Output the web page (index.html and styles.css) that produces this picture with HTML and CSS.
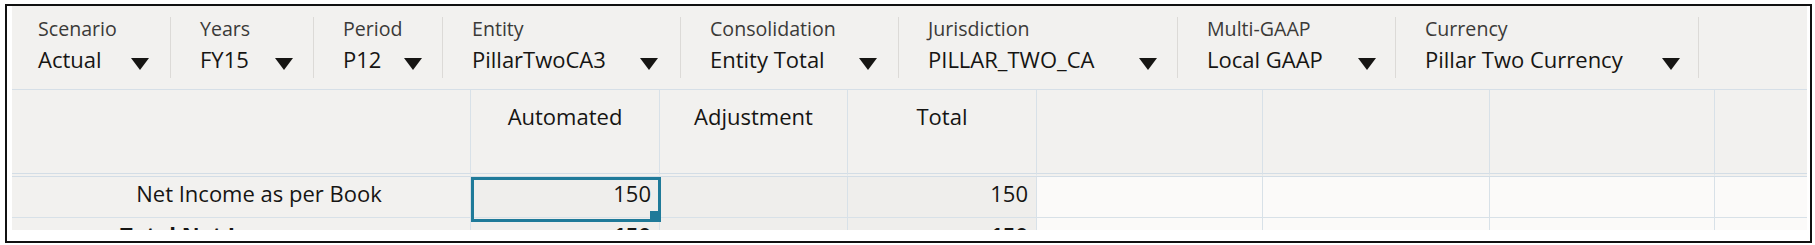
FILE: index.html
```html
<!DOCTYPE html>
<html lang="en">
<head>
    <meta charset="UTF-8">
    <meta name="viewport" content="width=device-width, initial-scale=1.0">
    <title>Pillar Two Form</title>
    <link rel="stylesheet" href="styles.css">
</head>
<body>

<div class="frame">
    <div class="sheet">
        <!-- Point of view bar -->
        <div class="pov-bar">
            <div class="pov pov-scenario">
                <div class="pov-label">Scenario</div>
                <div class="pov-value"><span>Actual</span><svg class="caret" viewBox="0 0 18 12"><polygon points="0,0 18,0 9,12"/></svg></div>
            </div>
            <div class="pov pov-years">
                <div class="pov-label">Years</div>
                <div class="pov-value"><span>FY15</span><svg class="caret" viewBox="0 0 18 12"><polygon points="0,0 18,0 9,12"/></svg></div>
            </div>
            <div class="pov pov-period">
                <div class="pov-label">Period</div>
                <div class="pov-value"><span>P12</span><svg class="caret" viewBox="0 0 18 12"><polygon points="0,0 18,0 9,12"/></svg></div>
            </div>
            <div class="pov pov-entity">
                <div class="pov-label">Entity</div>
                <div class="pov-value"><span>PillarTwoCA3</span><svg class="caret" viewBox="0 0 18 12"><polygon points="0,0 18,0 9,12"/></svg></div>
            </div>
            <div class="pov pov-consol">
                <div class="pov-label">Consolidation</div>
                <div class="pov-value"><span>Entity Total</span><svg class="caret" viewBox="0 0 18 12"><polygon points="0,0 18,0 9,12"/></svg></div>
            </div>
            <div class="pov pov-juris">
                <div class="pov-label">Jurisdiction</div>
                <div class="pov-value"><span>PILLAR_TWO_CA</span><svg class="caret" viewBox="0 0 18 12"><polygon points="0,0 18,0 9,12"/></svg></div>
            </div>
            <div class="pov pov-gaap">
                <div class="pov-label">Multi-GAAP</div>
                <div class="pov-value"><span>Local GAAP</span><svg class="caret" viewBox="0 0 18 12"><polygon points="0,0 18,0 9,12"/></svg></div>
            </div>
            <div class="pov pov-currency">
                <div class="pov-label">Currency</div>
                <div class="pov-value"><span>Pillar Two Currency</span><svg class="caret" viewBox="0 0 18 12"><polygon points="0,0 18,0 9,12"/></svg></div>
            </div>
        </div>

        <!-- Data grid -->
        <div class="grid">
            <div class="cell head"></div>
            <div class="cell head col-head">Automated</div>
            <div class="cell head col-head">Adjustment</div>
            <div class="cell head col-head">Total</div>
            <div class="cell head"></div>
            <div class="cell head"></div>
            <div class="cell head"></div>
            <div class="cell head last"></div>

            <div class="cell row-head">Net Income as per Book</div>
            <div class="cell num readonly selected">150<span class="handle"></span></div>
            <div class="cell num readonly"></div>
            <div class="cell num readonly">150</div>
            <div class="cell open"></div>
            <div class="cell open"></div>
            <div class="cell open"></div>
            <div class="cell open last"></div>

            <div class="cell row-head total-head bold">Total Net Income</div>
            <div class="cell num readonly bold">150</div>
            <div class="cell num readonly"></div>
            <div class="cell num readonly bold">150</div>
            <div class="cell open"></div>
            <div class="cell open"></div>
            <div class="cell open"></div>
            <div class="cell open last"></div>
        </div>
    </div>
</div>

</body>
</html>
```

FILE: styles.css
```css
body {
    margin: 0;
    padding: 0;
    background-color: #fff;
    font-family: "Open Sans", "Noto Sans", sans-serif;
    color: #161513;
}
.frame {
    box-sizing: border-box;
    width: 1807px;
    height: 239px;
    margin: 4px 0 0 5px;
    padding: 0 3px 11px 5px;
    border: 2px solid #111;
    background-color: #fff;
}
.sheet {
    height: 100%;
    overflow: hidden;
    background-color: #f2f1ef;
}

/* POV bar */
.pov-bar {
    display: flex;
    padding: 11px 0 11px 0;
    border-bottom: 1px solid #d6dfe7;
}
.pov {
    box-sizing: border-box;
    height: 61px;
    padding: 0 20px 0 29px;
    border-left: 1px solid #dcdad7;
    display: flex;
    flex-direction: column;
}
.pov-label {
    font-size: 19.6px;
    line-height: 24px;
    color: #3b3a38;
}
.pov-value {
    margin-top: 3px;
    display: flex;
    justify-content: space-between;
    font-size: 22px;
    line-height: 30px;
    white-space: nowrap;
}
.caret {
    width: 18px;
    height: 12px;
    margin-top: 14px;
    fill: #161513;
}
.pov-scenario { width: 158px; border-left: none; padding-left: 26px; padding-right: 21px; }
.pov-years { width: 143px; }
.pov-period { width: 129px; }
.pov-entity { width: 238px; padding-right: 22px; }
.pov-consol { width: 218px; padding-right: 21px; }
.pov-juris { width: 279px; }
.pov-gaap { width: 218px; padding-right: 19px; }
.pov-currency { width: 304px; padding-right: 18px; border-right: 1px solid #dcdad7; }

/* Grid */
.grid {
    display: grid;
    grid-template-columns: 459px 189px 188px 189px 226px 227px 225px 1fr;
    grid-template-rows: 87px 41px 41px;
    font-size: 22px;
}
.cell {
    box-sizing: border-box;
    border-right: 1px solid #d8e1e8;
    border-bottom: 1px solid #d8e1e8;
    line-height: 33px;
    white-space: nowrap;
}
.cell.last {
    border-right: none;
}
.head {
    border-bottom: 4px double #d3dde6;
}
.col-head {
    padding-top: 11px;
    line-height: 30px;
    text-align: center;
}
.row-head {
    padding-left: 36px;
    text-align: center;
}
.total-head {
    padding-left: 108px;
    text-align: left;
}
.num {
    padding-right: 8px;
    text-align: right;
}
.readonly {
    background-color: #efeeec;
}
.open {
    background-color: #fbfaf9;
}
.bold {
    font-weight: bold;
}
.selected {
    position: relative;
}
.selected::after {
    content: "";
    position: absolute;
    top: 0;
    left: 0;
    right: -2px;
    bottom: -5px;
    border: 3px solid #1f7a99;
}
.handle {
    position: absolute;
    right: -2px;
    bottom: -5px;
    width: 11px;
    height: 11px;
    background-color: #1f7a99;
}
```
